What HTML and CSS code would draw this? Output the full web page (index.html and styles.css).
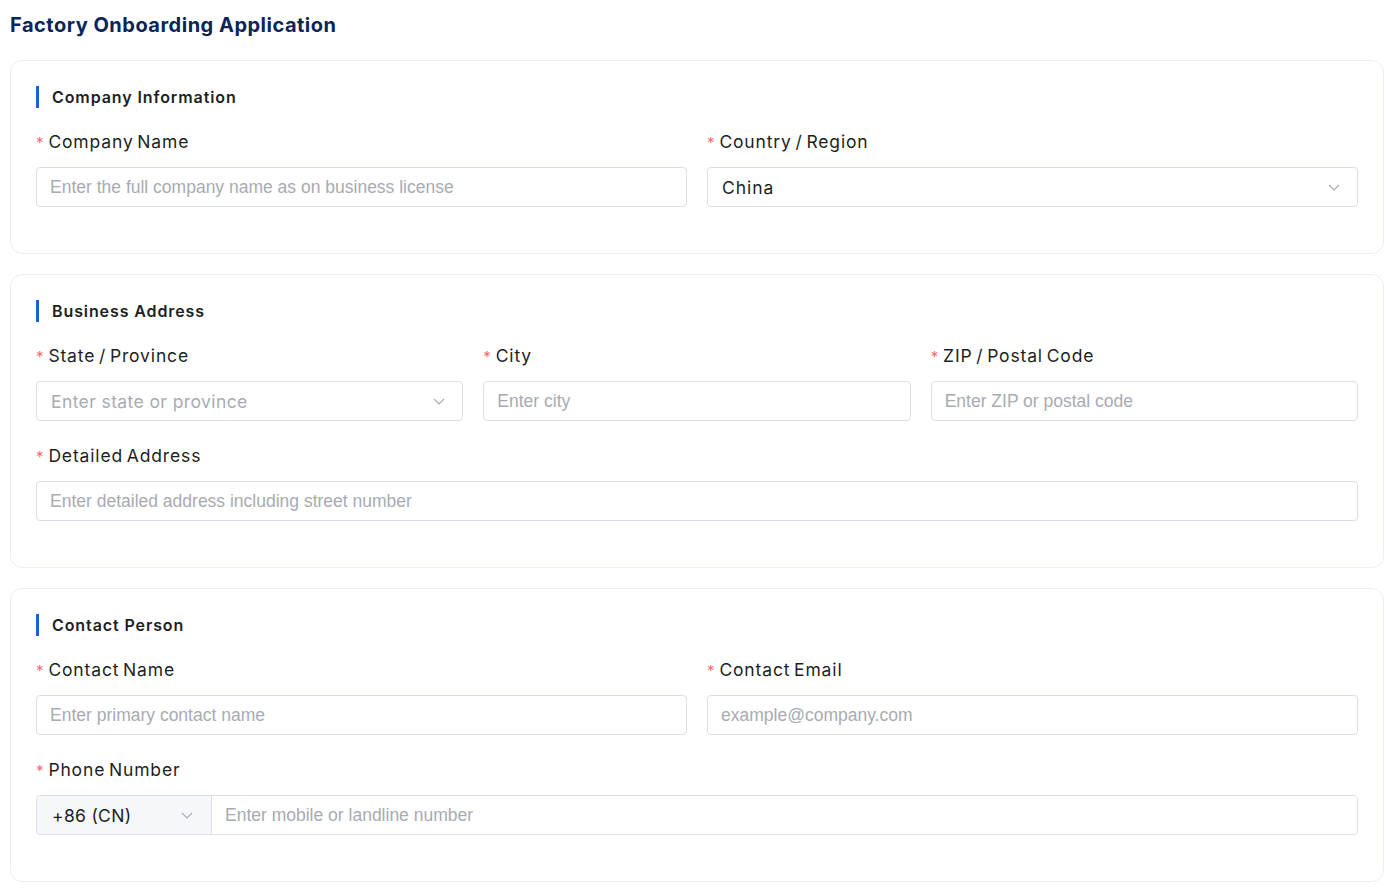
FILE: index.html
```html
<!DOCTYPE html>
<html lang="en">
<head>
  <meta charset="UTF-8">
  <meta name="viewport" content="width=device-width, initial-scale=1.0">
  <title>Factory Onboarding Application</title>
  <link rel="stylesheet" href="styles.css">
</head>
<body>
  <div class="page">
    <h1 class="page-title">Factory Onboarding Application</h1>

    <form class="onboarding-form">
      <!-- Company -->
      <section class="card">
        <h2 class="section-title">Company Information</h2>
        <div class="row cols-2">
          <div class="form-item">
            <label class="form-label required" for="company-name">Company Name</label>
            <input class="text-input" id="company-name" type="text" placeholder="Enter the full company name as on business license">
          </div>
          <div class="form-item">
            <label class="form-label required">Country / Region</label>
            <div class="select">
              <span class="select-value">China</span>
              <svg class="chevron" viewBox="0 0 14 14"><polyline points="2,5 7,10 12,5"/></svg>
            </div>
          </div>
        </div>
      </section>

      <!-- Address -->
      <section class="card">
        <h2 class="section-title">Business Address</h2>
        <div class="row cols-3">
          <div class="form-item">
            <label class="form-label required">State / Province</label>
            <div class="select">
              <span class="select-value placeholder">Enter state or province</span>
              <svg class="chevron" viewBox="0 0 14 14"><polyline points="2,5 7,10 12,5"/></svg>
            </div>
          </div>
          <div class="form-item">
            <label class="form-label required" for="city">City</label>
            <input class="text-input" id="city" type="text" placeholder="Enter city">
          </div>
          <div class="form-item">
            <label class="form-label required" for="zip">ZIP / Postal Code</label>
            <input class="text-input" id="zip" type="text" placeholder="Enter ZIP or postal code">
          </div>
        </div>
        <div class="form-item">
          <label class="form-label required" for="address">Detailed Address</label>
          <input class="text-input" id="address" type="text" placeholder="Enter detailed address including street number">
        </div>
      </section>

      <!-- Contact -->
      <section class="card">
        <h2 class="section-title">Contact Person</h2>
        <div class="row cols-2">
          <div class="form-item">
            <label class="form-label required" for="contact-name">Contact Name</label>
            <input class="text-input" id="contact-name" type="text" placeholder="Enter primary contact name">
          </div>
          <div class="form-item">
            <label class="form-label required" for="contact-email">Contact Email</label>
            <input class="text-input" id="contact-email" type="email" placeholder="example@company.com">
          </div>
        </div>
        <div class="form-item">
          <label class="form-label required" for="phone">Phone Number</label>
          <div class="phone-group">
            <div class="phone-prefix">
              <span>+86 (CN)</span>
              <svg class="chevron" viewBox="0 0 14 14"><polyline points="2,5 7,10 12,5"/></svg>
            </div>
            <input class="phone-input" id="phone" type="tel" placeholder="Enter mobile or landline number">
          </div>
        </div>
      </section>
    </form>
  </div>
</body>
</html>
```

FILE: styles.css
```css
:root {
  --title-color: #0b2559;
  --accent: #1763d6;
  --text-color: #1c1f23;
  --placeholder: #a8abb2;
  --border-color: #dcdfe6;
  --card-border: #ebeef5;
  --required: #f56c6c;
  --fill-light: #f5f7fa;
}

* {
  box-sizing: border-box;
  margin: 0;
  padding: 0;
}

html, body {
  background-color: #fff;
  overflow: hidden;
}

body {
  font-family: Inter, "Open Sans", sans-serif;
  color: var(--text-color);
}

.page {
  padding: 10px 15px 0 10px;
}

.page-title {
  font-size: 20px;
  line-height: 30px;
  font-weight: 700;
  letter-spacing: 0.5px;
  color: var(--title-color);
  margin-bottom: 20px;
}

.card {
  background-color: #fff;
  border: 1px solid var(--card-border);
  border-radius: 12px;
  padding: 25px 25px 24px;
  margin-bottom: 20px;
}

.section-title {
  height: 22px;
  border-left: 3px solid var(--accent);
  padding-left: 13px;
  font-size: 16px;
  line-height: 22px;
  font-weight: 600;
  letter-spacing: 0.9px;
  margin-bottom: 21px;
}

.row {
  display: grid;
  column-gap: 20px;
}

.cols-2 { grid-template-columns: 1fr 1fr; }
.cols-3 { grid-template-columns: 1fr 1fr 1fr; }

.form-item {
  margin-bottom: 22px;
}

.form-label {
  display: block;
  height: 26px;
  font-size: 17.5px;
  line-height: 26px;
  letter-spacing: 0.85px;
  word-spacing: -2px;
  margin-bottom: 12px;
  color: var(--text-color);
}

.form-label.required::before {
  content: "*";
  color: var(--required);
  margin-right: 4px;
  font-size: 15px;
  line-height: 1;
}

.text-input,
.phone-input {
  width: 100%;
  height: 40px;
  padding: 0 13px;
  border: 1px solid var(--border-color);
  border-radius: 4px;
  font-family: "Liberation Sans", Arial, sans-serif;
  font-size: 17.5px;
  color: var(--text-color);
  background: #fff;
}

.text-input::placeholder,
.phone-input::placeholder {
  color: var(--placeholder);
}

.text-input:focus,
.phone-input:focus {
  outline: none;
  border-color: var(--accent);
}

.select {
  display: flex;
  align-items: center;
  justify-content: space-between;
  height: 40px;
  padding: 0 16px 0 14px;
  border: 1px solid var(--border-color);
  border-radius: 4px;
  font-size: 17.5px;
  letter-spacing: 0.95px;
  cursor: pointer;
}

.select-value.placeholder {
  color: var(--placeholder);
  letter-spacing: 0.4px;
}

.chevron {
  width: 14px;
  height: 14px;
  flex-shrink: 0;
  fill: none;
  stroke: var(--placeholder);
  stroke-width: 1.1;
}

.phone-group {
  display: flex;
  height: 40px;
  border: 1px solid var(--border-color);
  border-radius: 4px;
}

.phone-prefix {
  display: flex;
  align-items: center;
  justify-content: space-between;
  width: 175px;
  flex-shrink: 0;
  padding: 0 17px 0 15px;
  background-color: var(--fill-light);
  border-right: 1px solid var(--border-color);
  border-radius: 4px 0 0 4px;
  font-size: 17.5px;
  letter-spacing: 0.3px;
}

.phone-input {
  height: 38px;
  border: none;
  border-radius: 0 4px 4px 0;
}
```
